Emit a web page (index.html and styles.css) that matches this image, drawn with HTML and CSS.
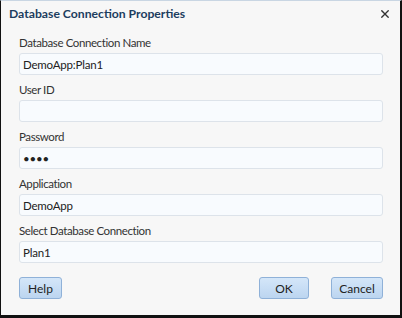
FILE: index.html
```html
<!DOCTYPE html>
<html lang="en">
<head>
    <meta charset="UTF-8">
    <meta name="viewport" content="width=device-width, initial-scale=1.0">
    <title>Database Connection Properties</title>
    <link rel="stylesheet" href="styles.css">
</head>
<body>
    <div class="dialog">
        <div class="dialog-header">
            <span class="dialog-title">Database Connection Properties</span>
            <button type="button" class="close-btn" aria-label="Close">
                <svg viewBox="0 0 10 10" width="8" height="8">
                    <path d="M1 1L9 9M9 1L1 9" stroke="#333" stroke-width="1.7" stroke-linecap="square"/>
                </svg>
            </button>
        </div>

        <form class="dialog-body">
            <div class="field">
                <label for="connName">Database Connection Name</label>
                <input type="text" id="connName" value="DemoApp:Plan1">
            </div>
            <div class="field">
                <label for="userId">User ID</label>
                <input type="text" id="userId" value="">
            </div>
            <div class="field">
                <label for="password">Password</label>
                <input type="password" id="password" value="abcd">
            </div>
            <div class="field">
                <label for="application">Application</label>
                <input type="text" id="application" value="DemoApp">
            </div>
            <div class="field">
                <label for="dbConn">Select Database Connection</label>
                <input type="text" id="dbConn" value="Plan1">
            </div>

            <div class="actions">
                <button type="button" class="btn btn-help">Help</button>
                <div class="actions-right">
                    <button type="button" class="btn btn-ok">OK</button>
                    <button type="button" class="btn btn-cancel">Cancel</button>
                </div>
            </div>
        </form>
    </div>
</body>
</html>
```

FILE: styles.css
```css
* {
    margin: 0;
    padding: 0;
    box-sizing: border-box;
}

body {
    font-family: Lato, "Liberation Sans", sans-serif;
    font-size: 11.5px;
    color: #333;
    background: #000;
    width: 402px;
    height: 318px;
    overflow: hidden;
}

.dialog {
    width: 402px;
    height: 318px;
    background: #f7f7f7;
    border-top: 1px solid #c9d6e3;
    border-left: 1px solid #111;
    border-right: 2px solid #111;
    border-bottom: 3px solid #111;
    display: flex;
    flex-direction: column;
}

.dialog-header {
    height: 25px;
    display: flex;
    align-items: center;
    justify-content: space-between;
    padding: 0 10px 0 8px;
}

.dialog-title {
    font-weight: bold;
    font-size: 12.2px;
    color: #1c3d5e;
}

.close-btn {
    background: none;
    border: none;
    width: 10px;
    height: 10px;
    display: flex;
    align-items: center;
    justify-content: center;
    cursor: pointer;
}

.dialog-body {
    padding: 9px 17px 0 18px;
    display: flex;
    flex-direction: column;
}

.field {
    display: flex;
    flex-direction: column;
    margin-bottom: 7px;
}

.field label {
    line-height: 16px;
    margin-bottom: 2px;
    letter-spacing: -0.4px;
    color: #333;
}

.field input {
    height: 22px;
    border: 1px solid #dde3ea;
    border-radius: 3px;
    background: #f8fbfe;
    padding: 0 3px;
    font-family: inherit;
    font-size: 11.5px;
    letter-spacing: -0.2px;
    color: #222;
    outline: none;
}

.actions {
    display: flex;
    justify-content: space-between;
    margin-top: 7px;
}

.actions-right {
    display: flex;
    gap: 22px;
}

.btn {
    height: 22px;
    border: 1px solid #8fb1d8;
    border-radius: 3px;
    background: linear-gradient(#d4e6f9, #bcd5f0);
    font-family: inherit;
    font-size: 12px;
    color: #222;
    cursor: pointer;
}

.btn-help {
    width: 43px;
}

.btn-ok {
    width: 50px;
}

.btn-cancel {
    width: 52px;
}
```
